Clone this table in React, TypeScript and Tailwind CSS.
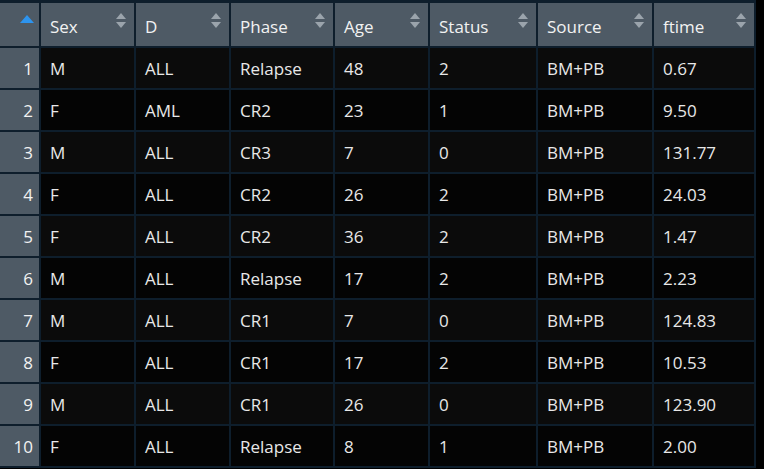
import React from 'react';

const cols = [
  { key: 'Sex', w: 'w-[93px]' },
  { key: 'D', w: 'w-[93px]' },
  { key: 'Phase', w: 'w-[102px]' },
  { key: 'Age', w: 'w-[93px]' },
  { key: 'Status', w: 'w-[106px]' },
  { key: 'Source', w: 'w-[114px]' },
  { key: 'ftime', w: 'w-[100px]' },
];

const rows = [
  ['M', 'ALL', 'Relapse', '48', '2', 'BM+PB', '0.67'],
  ['F', 'AML', 'CR2', '23', '1', 'BM+PB', '9.50'],
  ['M', 'ALL', 'CR3', '7', '0', 'BM+PB', '131.77'],
  ['F', 'ALL', 'CR2', '26', '2', 'BM+PB', '24.03'],
  ['F', 'ALL', 'CR2', '36', '2', 'BM+PB', '1.47'],
  ['M', 'ALL', 'Relapse', '17', '2', 'BM+PB', '2.23'],
  ['M', 'ALL', 'CR1', '7', '0', 'BM+PB', '124.83'],
  ['F', 'ALL', 'CR1', '17', '2', 'BM+PB', '10.53'],
  ['M', 'ALL', 'CR1', '26', '0', 'BM+PB', '123.90'],
  ['F', 'ALL', 'Relapse', '8', '1', 'BM+PB', '2.00'],
];

const SortIcon = () => (
  <svg width="10" height="15" viewBox="0 0 10 15" className="absolute right-[8px] top-[10px]">
    <path d="M5 0 L10 6 L0 6 Z" fill="#9ba4ac" />
    <path d="M0 9 L10 9 L5 15 Z" fill="#9ba4ac" />
  </svg>
);

export default function App() {
  return (
    <div
      className="w-[764px] h-[469px] bg-black overflow-hidden"
      style={{ fontFamily: '"Segoe UI", "Open Sans", "Noto Sans", sans-serif' }}
    >
      <div className="w-[756px] bg-[#0e1e2c] pt-[3px] pb-[2px] pr-[2px] flex flex-col gap-[2px]">
        <div className="flex gap-[2px] h-[43px]">
          <div className="w-[39px] bg-[#4e5a65] relative">
            <svg width="14" height="8" viewBox="0 0 14 8" className="absolute left-[20px] top-[12px]">
              <path d="M7 0 L14 8 L0 8 Z" fill="#2d94ee" />
            </svg>
          </div>
          {cols.map((c) => (
            <div
              key={c.key}
              className={`${c.w} bg-[#4e5a65] relative flex items-center pl-[9px] pt-[4px] text-[17px] text-[#f2f2f2]`}
            >
              {c.key}
              <SortIcon />
            </div>
          ))}
        </div>
        {rows.map((r, i) => (
          <div key={i} className="flex gap-[2px] h-[40px]">
            <div className="w-[39px] bg-[#4e5a65] flex items-center justify-end pr-[6px] pt-[2px] text-[17px] text-[#f2f2f2]">
              {i + 1}
            </div>
            {r.map((v, j) => (
              <div
                key={j}
                className={`${cols[j].w} ${i % 2 === 0 ? 'bg-[#0b0b0b]' : 'bg-[#040404]'} flex items-center pl-[9px] pt-[2px] text-[17px] text-[#e8e8e8]`}
              >
                {v}
              </div>
            ))}
          </div>
        ))}
      </div>
    </div>
  );
}
